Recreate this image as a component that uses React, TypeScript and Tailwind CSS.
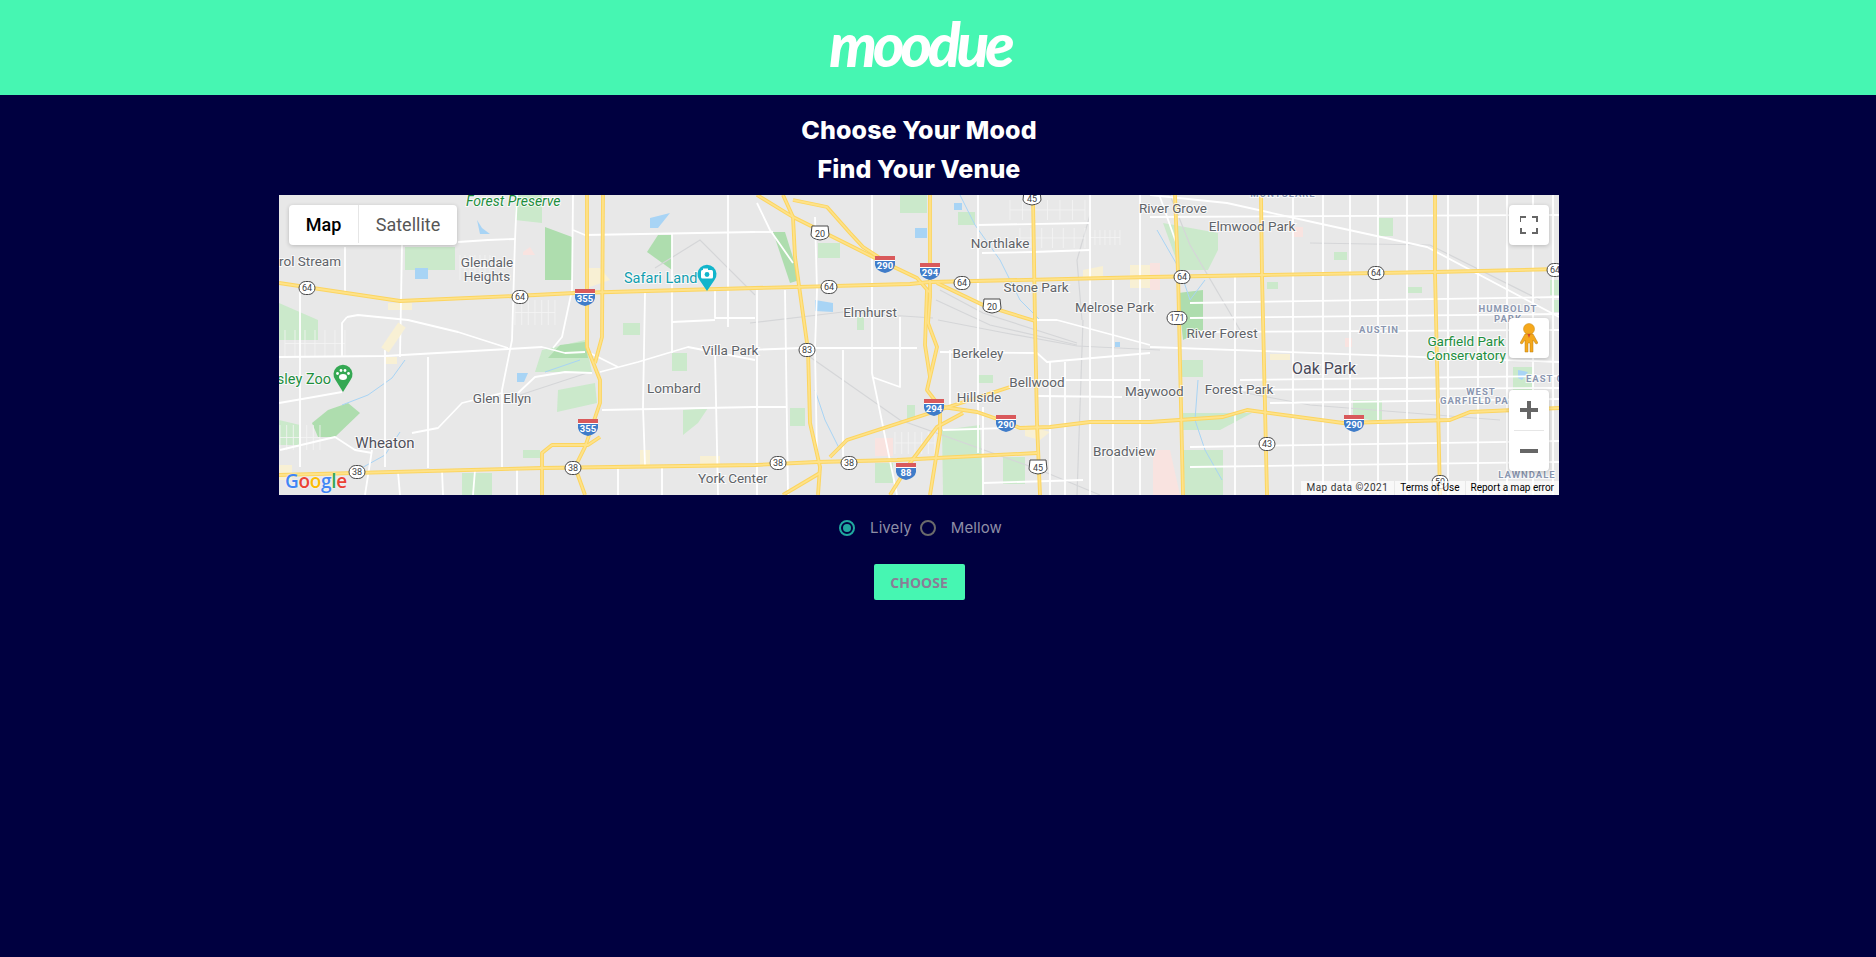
import { useState } from "react";

const parks = [
  "515,195 542,195 542,223 515,220",
  "542,350 585,340 592,372 535,372",
  "558,390 595,383 597,403 557,412",
  "683,410 708,408 698,423 683,435",
  "672,353 687,353 687,371 672,371",
  "623,323 640,323 640,335 623,335",
  "405,247 455,247 455,270 405,270",
  "462,473 492,473 492,495 462,495",
  "523,450 540,450 540,458 523,458",
  "279,303 318,320 318,340 279,340",
  "279,420 300,425 300,445 279,445",
  "818,243 840,243 840,258 818,258",
  "958,212 975,212 975,225 958,225",
  "900,195 927,195 927,213 900,213",
  "942,430 980,425 983,495 943,495",
  "1003,457 1025,457 1025,484 1003,484",
  "875,463 893,463 893,483 875,483",
  "790,408 805,408 805,426 790,426",
  "857,317 864,317 864,330 857,330",
  "907,405 915,405 915,420 907,420",
  "978,375 993,375 993,383 978,383",
  "1163,223 1218,233 1218,250 1208,270 1180,270",
  "1183,450 1223,450 1223,495 1185,495",
  "1182,360 1203,360 1203,377 1182,377",
  "1180,413 1252,413 1220,430 1183,430",
  "1353,400 1382,400 1382,422 1353,417",
  "1378,218 1393,218 1393,236 1378,236",
  "1334,252 1347,252 1347,260 1334,260",
  "1267,282 1278,282 1278,289 1267,289",
  "1408,287 1422,287 1422,293 1408,293",
  "1552,300 1559,300 1559,312 1552,312",
  "1513,367 1533,367 1533,390 1513,390",
  "1550,280 1559,280 1559,295 1550,295",
];

const darkParks = [
  "545,227 572,237 572,280 545,280",
  "647,252 658,235 672,235 672,270",
  "312,423 328,410 348,403 360,413 335,437 318,437",
  "773,232 785,232 800,280 790,283",
  "1178,293 1203,290 1203,330 1183,340",
  "560,345 585,342 588,358 548,358",
];

const pinks = [
  "1153,450 1170,450 1180,495 1153,495",
  "1150,263 1160,263 1160,290 1150,290",
  "1293,227 1303,227 1303,237 1293,237",
  "1345,338 1352,338 1352,347 1345,347",
  "875,438 893,438 893,456 875,456",
  "523,252 530,247 535,255 523,255",
];

const creams = [
  "1083,270 1103,266 1103,277 1083,277",
  "1130,265 1150,265 1150,288 1130,288",
  "587,268 600,268 610,280 587,288",
  "388,303 412,303 412,310 388,310",
  "385,357 397,357 397,364 385,364",
  "279,465 292,465 292,480 279,480",
  "640,450 650,450 650,465 640,465",
  "700,456 720,456 720,465 700,465",
  "1270,354 1290,354 1290,360 1270,360",
  "1025,425 1050,432 1040,440 1025,436",
];

const water = [
  "915,228 927,228 927,238 915,238",
  "815,300 833,303 833,312 815,311",
  "415,268 428,268 428,279 415,279",
  "517,373 528,373 524,382 517,382",
  "650,218 670,213 658,228 650,228",
  "477,220 482,228 490,234 480,234",
  "954,203 962,203 962,210 954,210",
  "1115,342 1120,342 1120,347 1115,347",
  "1518,370 1528,372 1522,380 1518,378",
];

const streams = [
  "M358 470 L385 455 L400 432",
  "M342 405 L368 395 L392 378 L405 360",
  "M545 372 L580 360",
  "M960 195 L975 225 L1000 260 L1020 300 L1040 320",
  "M1157 230 L1180 270 L1190 300 L1205 280",
  "M1198 380 L1195 420 L1205 450 L1222 480",
  "M815 390 L825 420 L840 450",
];

const rails = [
  "M940 290 L983 313 L1077 343",
  "M936 300 L990 325 L1077 345",
  "M938 320 L1000 332 L1077 346",
  "M1077 346 L1160 350",
  "M750 323 L843 312 L933 318",
  "M1083 320 L1077 495",
  "M1090 215 L1077 260 L1082 320",
  "M1170 195 L1190 245 L1240 330",
  "M800 350 L900 420 L1040 470 L1100 495",
  "M1230 390 L1310 405 L1500 420",
  "M1310 243 L1430 245 L1540 300",
  "M520 395 L590 372",
  "M655 268 L700 240 L755 295",
];

const whites = [
  "M458 242 L488 240 L515 239",
  "M517 195 L515 240 L512 340 L502 390 L502 467",
  "M573 195 L572 290 L562 337 L553 348",
  "M573 230 L585 235 L755 232",
  "M672 233 L672 353",
  "M728 195 L728 295 L728 327",
  "M715 290 L715 318 L755 318",
  "M672 322 L715 320",
  "M645 293 L643 407 L645 465",
  "M345 247 L345 293",
  "M347 317 L342 323 L342 357",
  "M402 245 L400 357",
  "M347 317 L358 315 L408 320 L458 332 L508 348",
  "M279 357 L385 356 L508 349 L542 347 L565 353 L585 352",
  "M590 353 L618 367",
  "M600 372 L638 362 L688 347 L755 360",
  "M518 393 L535 377 L565 372 L592 373",
  "M385 350 L385 467",
  "M428 357 L428 468",
  "M279 403 L308 398 L342 392",
  "M280 450 L335 437 L355 450 L372 453",
  "M372 450 L365 495",
  "M412 433 L438 428 L462 403 L502 393",
  "M602 410 L755 407",
  "M715 353 L718 495",
  "M398 472 L400 495",
  "M442 470 L443 495",
  "M475 470 L473 495",
  "M517 468 L517 495",
  "M618 466 L618 495",
  "M662 465 L662 495",
  "M300 290 L300 467",
  "M757 203 L770 230 L793 263",
  "M750 232 L773 232",
  "M757 290 L757 495",
  "M785 290 L788 495",
  "M815 217 L817 290 L815 350 L817 457",
  "M750 350 L800 348 L917 348",
  "M940 352 L1037 353 L1047 362 L1150 353",
  "M872 195 L872 373 L897 495",
  "M872 377 L900 387 L900 317",
  "M843 350 L843 457",
  "M950 350 L950 407",
  "M978 195 L978 453",
  "M982 253 L1033 252 L1090 250",
  "M977 225 L1090 223",
  "M1037 320 L1057 320 L1113 335 L1150 345",
  "M750 407 L787 407",
  "M1065 362 L1065 495",
  "M1090 195 L1090 495",
  "M1037 380 L1150 380",
  "M1037 396 L1122 397",
  "M943 430 L1040 427",
  "M983 483 L1083 480",
  "M983 407 L983 495",
  "M1050 362 L1050 495",
  "M1113 280 L1113 495",
  "M1140 195 L1140 495",
  "M1150 195 L1227 203 L1317 223 L1427 247 L1559 317",
  "M1160 197 L1177 245",
  "M1150 347 L1559 362",
  "M1235 275 L1235 495",
  "M1293 195 L1293 495",
  "M1323 195 L1323 495",
  "M1350 195 L1350 495",
  "M1378 195 L1378 495",
  "M1407 195 L1407 495",
  "M1448 195 L1448 495",
  "M1478 195 L1478 495",
  "M1507 195 L1507 495",
  "M1533 195 L1533 495",
  "M1553 195 L1553 495",
  "M1150 217 L1559 215",
  "M1190 303 L1559 297",
  "M1190 318 L1559 314",
  "M1190 332 L1559 330",
  "M1240 380 L1559 376",
  "M1220 390 L1559 388",
  "M1270 403 L1559 399",
  "M1190 447 L1559 441",
  "M1190 467 L1559 462",
];

// thin residential streets, drawn as small combs
const neighbourhoods = [
  [285, 330, 60, 27],
  [460, 255, 30, 25],
  [515, 300, 40, 25],
  [1010, 200, 75, 20],
  [1020, 228, 65, 20],
  [895, 432, 40, 22],
  [1090, 230, 30, 15],
  [280, 425, 40, 25],
];

const highways = [
  "M279 283 L400 301 L515 296 L575 293 L755 288 L910 284 L930 282 L1150 277 L1262 275 L1435 272 L1559 269",
  "M587 195 L587 347 L600 380 L600 403 L585 447 L575 467 L585 495",
  "M603 195 L602 337 L595 363",
  "M542 495 L542 453 L552 445 L588 445 L600 437",
  "M279 475 L542 468 L755 465 L817 462 L897 460 L1037 453",
  "M783 195 L793 217 L795 257 L808 350 L810 423 L820 467 L818 495",
  "M757 195 L793 217 L873 257 L917 278 L930 293",
  "M793 200 L827 207 L850 233 L863 247 L883 260",
  "M930 195 L930 297 L928 323 L937 347 L930 377 L927 390 L940 407 L940 433 L930 495",
  "M927 290 L925 345 L930 377",
  "M937 283 L983 305 L1035 321",
  "M1033 195 L1035 323 L1037 423 L1040 495",
  "M943 407 L977 412 L1000 420 L1020 428 L1050 427 L1090 422 L1150 422 L1223 417 L1247 410 L1343 423 L1450 420 L1470 412 L1559 408",
  "M830 457 L847 440 L930 413 L1010 387",
  "M890 495 L910 463 L937 427 L963 413",
  "M783 495 L820 473",
  "M1175 195 L1178 273 L1183 495",
  "M1261 195 L1262 275 L1267 495",
  "M1435 195 L1435 273 L1440 495",
];

type Label = {
  t: string;
  x: number;
  y: number;
  c?: string;
  s?: number;
  a?: "start" | "middle" | "end";
  i?: boolean;
  b?: boolean;
};

const labels: Label[] = [
  { t: "Forest Preserve", x: 466, y: 206, c: "#1e8e3e", i: true, s: 14 },
  { t: "Carol Stream", x: 341, y: 266, a: "end" },
  { t: "Glendale", x: 487, y: 267, a: "middle" },
  { t: "Heights", x: 487, y: 281, a: "middle" },
  { t: "Safari Land", x: 624, y: 283, c: "#129eaf", s: 14.5 },
  { t: "Villa Park", x: 702, y: 355 },
  { t: "Lombard", x: 674, y: 393, a: "middle" },
  { t: "Glen Ellyn", x: 502, y: 403, a: "middle" },
  { t: "Cosley Zoo", x: 331, y: 384, c: "#1e8e3e", a: "end", s: 14.5 },
  { t: "Wheaton", x: 385, y: 448, a: "middle", s: 15, c: "#50505a" },
  { t: "York Center", x: 698, y: 483 },
  { t: "Elmhurst", x: 870, y: 317, a: "middle" },
  { t: "Northlake", x: 1000, y: 248, a: "middle" },
  { t: "Stone Park", x: 1036, y: 292, a: "middle" },
  { t: "Melrose Park", x: 1075, y: 312 },
  { t: "Berkeley", x: 978, y: 358, a: "middle" },
  { t: "Bellwood", x: 1037, y: 387, a: "middle" },
  { t: "Hillside", x: 979, y: 402, a: "middle" },
  { t: "Maywood", x: 1125, y: 396 },
  { t: "Broadview", x: 1093, y: 456 },
  { t: "River Grove", x: 1207, y: 213, a: "end" },
  { t: "Elmwood Park", x: 1252, y: 231, a: "middle" },
  { t: "River Forest", x: 1222, y: 338, a: "middle" },
  { t: "Oak Park", x: 1324, y: 374, a: "middle", s: 16, c: "#4a4a5a" },
  { t: "Forest Park", x: 1239, y: 394, a: "middle" },
  { t: "Garfield Park", x: 1466, y: 346, a: "middle", c: "#1e8e3e" },
  { t: "Conservatory", x: 1466, y: 360, a: "middle", c: "#1e8e3e" },
  { t: "AUSTIN", x: 1379, y: 333, a: "middle", s: 9.5, c: "#8a96b0", b: true },
  { t: "HUMBOLDT", x: 1508, y: 312, a: "middle", s: 9.5, c: "#8a96b0", b: true },
  { t: "PARK", x: 1508, y: 322, a: "middle", s: 9.5, c: "#8a96b0", b: true },
  { t: "MONTCLARE", x: 1283, y: 197, a: "middle", s: 9.5, c: "#8a96b0", b: true },
  { t: "EAST G", x: 1526, y: 382, s: 9.5, c: "#8a96b0", b: true },
  { t: "WEST", x: 1481, y: 395, a: "middle", s: 9.5, c: "#8a96b0", b: true },
  { t: "GARFIELD PA", x: 1440, y: 404, s: 9.5, c: "#8a96b0", b: true },
  { t: "LAWNDALE", x: 1527, y: 478, a: "middle", s: 9.5, c: "#8a96b0", b: true },
];

const stateRoutes = [
  ["64", 307, 288], ["64", 520, 297], ["38", 357, 472], ["38", 573, 468],
  ["64", 829, 287], ["64", 962, 283], ["83", 807, 350], ["38", 778, 463],
  ["38", 849, 463], ["64", 1182, 277], ["171", 1177, 318], ["64", 1376, 273],
  ["64", 1555, 270], ["43", 1267, 444], ["50", 1440, 482],
] as const;

const usRoutes = [
  ["20", 820, 233], ["20", 992, 306], ["45", 1032, 198], ["45", 1038, 467],
] as const;

const interstates = [
  ["355", 585, 297], ["355", 588, 427], ["290", 885, 264], ["294", 930, 271],
  ["294", 934, 407], ["290", 1006, 423], ["88", 906, 471], ["290", 1354, 423],
] as const;

function MapDrawing() {
  return (
    <svg viewBox="279 195 1280 300" className="block h-[300px] w-[1280px] font-['Roboto']">
      <rect x="279" y="195" width="1280" height="300" fill="#e8e8e8" />
      {creams.map((p) => (
        <polygon key={p} points={p} fill="#f8f0d4" />
      ))}
      {pinks.map((p) => (
        <polygon key={p} points={p} fill="#f9e3e0" />
      ))}
      {parks.map((p) => (
        <polygon key={p} points={p} fill="#cbe9cb" />
      ))}
      {darkParks.map((p) => (
        <polygon key={p} points={p} fill="#aeddae" />
      ))}
      {water.map((p) => (
        <polygon key={p} points={p} fill="#a8d4f5" />
      ))}
      {streams.map((d) => (
        <path key={d} d={d} fill="none" stroke="#a8d4f5" strokeWidth="1" />
      ))}
      {rails.map((d) => (
        <path key={d} d={d} fill="none" stroke="#d5d6d8" strokeWidth="1.2" />
      ))}
      {neighbourhoods.map(([x, y, w, h]) => (
        <g key={`${x}-${y}`} stroke="#f4f4f4" strokeWidth="0.8">
          {[0, 1, 2, 3, 4, 5, 6].map((n) => (
            <path key={n} d={`M${x + (n * w) / 6} ${y} V${y + h}`} />
          ))}
          <path d={`M${x} ${y + h / 2} H${x + w}`} />
        </g>
      ))}
      {whites.map((d) => (
        <path key={d} d={d} fill="none" stroke="#ffffff" strokeWidth="1.8" strokeLinejoin="round" />
      ))}
      <path d="M385 350 L402 325" fill="none" stroke="#f8f0d4" strokeWidth="9" />
      {highways.map((d) => (
        <path key={d} d={d} fill="none" stroke="#fcd560" strokeWidth="3.8" strokeLinejoin="round" />
      ))}
      {highways.map((d) => (
        <path key={d + "i"} d={d} fill="none" stroke="#fee289" strokeWidth="1.8" strokeLinejoin="round" />
      ))}
      {stateRoutes.map(([t, x, y]) => {
        const w = t.length > 2 ? 20 : 16;
        return (
          <g key={t + x}>
            <rect x={x - w / 2} y={y - 6.5} width={w} height={13} rx="6.5" fill="#ffffff" stroke="#4a4a4a" />
            <text x={x} y={y + 3.2} textAnchor="middle" fontSize="9" fill="#3c4043">{t}</text>
          </g>
        );
      })}
      {usRoutes.map(([t, x, y]) => (
        <g key={t + x}>
          <path
            d={`M${x - 8} ${y - 7} L${x + 8} ${y - 7} L${x + 9} ${y + 2} Q${x + 8} ${y + 6} ${x} ${y + 7} Q${x - 8} ${y + 6} ${x - 9} ${y + 2} Z`}
            fill="#ffffff"
            stroke="#4a4a4a"
          />
          <text x={x} y={y + 3.5} textAnchor="middle" fontSize="9" fill="#3c4043">{t}</text>
        </g>
      ))}
      {interstates.map(([t, x, y]) => (
        <g key={t + x}>
          <path
            d={`M${x - 10} ${y - 4} L${x + 10} ${y - 4} L${x + 10} ${y + 1} Q${x + 9} ${y + 7} ${x} ${y + 9} Q${x - 9} ${y + 7} ${x - 10} ${y + 1} Z`}
            fill="#3f7cc9"
          />
          <path d={`M${x - 10} ${y - 8} L${x + 10} ${y - 8} L${x + 10} ${y - 4} L${x - 10} ${y - 4} Z`} fill="#d9595b" />
          <path d={`M${x - 10} ${y - 3.5} L${x + 10} ${y - 3.5}`} stroke="#ffffff" />
          <text x={x} y={y + 5} textAnchor="middle" fontSize="9.5" fontWeight="700" fill="#ffffff">{t}</text>
        </g>
      ))}
      {labels.map((l) => (
        <text
          key={l.t + l.x}
          x={l.x}
          y={l.y}
          textAnchor={l.a ?? "start"}
          fontSize={l.s ?? 13.5}
          fontStyle={l.i ? "italic" : "normal"}
          fontWeight={l.b ? 700 : 400}
          letterSpacing={l.b ? 1 : 0}
          fill={l.c ?? "#5f6368"}
          stroke="#ffffff"
          strokeWidth="2"
          strokeOpacity="0.75"
          className="[paint-order:stroke]"
        >
          {l.t}
        </text>
      ))}
      <path d="M707 291 L699.5 280 A9.5 9.5 0 1 1 714.5 280 Z" fill="#12b5cb" />
      <rect x="701" y="270" width="12" height="8.5" rx="1.5" fill="#ffffff" />
      <rect x="703" y="268.5" width="5" height="3" fill="#ffffff" />
      <circle cx="707" cy="274.5" r="2.4" fill="#12b5cb" />
      <path d="M343 392 L335.5 380 A9.5 9.5 0 1 1 350.5 380 Z" fill="#34a853" />
      <ellipse cx="343" cy="377" rx="4" ry="3" fill="#ffffff" />
      <circle cx="337.5" cy="373.5" r="1.4" fill="#ffffff" />
      <circle cx="341" cy="370.5" r="1.4" fill="#ffffff" />
      <circle cx="345" cy="370.5" r="1.4" fill="#ffffff" />
      <circle cx="348.5" cy="373.5" r="1.4" fill="#ffffff" />
    </svg>
  );
}

function ControlBox({ className, children }: { className: string; children: React.ReactNode }) {
  return (
    <div className={`absolute flex w-10 flex-col items-center justify-center rounded-sm bg-white shadow-[0_1px_4px_rgba(0,0,0,0.2)] ${className}`}>
      {children}
    </div>
  );
}

function MapPanel() {
  return (
    <div className="relative h-[300px] w-[1280px] overflow-hidden">
      <MapDrawing />

      <div className="absolute left-[10px] top-[10px] flex h-10 w-[168px] rounded-sm bg-white pb-[2px] font-['Roboto'] text-[18px] shadow-[0_1px_4px_rgba(0,0,0,0.2)]">
        <div className="flex w-[69px] items-center justify-center font-medium text-black">Map</div>
        <div className="flex flex-1 items-center justify-center border-l border-[#e6e6e6] text-[#565656]">Satellite</div>
      </div>

      <ControlBox className="right-[10px] top-[10px] h-10">
        <svg width="18" height="18" viewBox="0 0 18 18" fill="none" stroke="#666666" strokeWidth="2">
          <path d="M0 6V1H6M12 1H17V6M17 12V17H12M6 17H1V12" />
        </svg>
      </ControlBox>

      <ControlBox className="right-[10px] top-[123px] h-10">
        <svg width="18" height="30" viewBox="0 0 18 30">
          <circle cx="9" cy="6" r="5.5" fill="#f5a81c" stroke="#c98a12" strokeWidth="0.5" />
          <path d="M5 11H13L18 20L16 21L13 17V29H10V20H8V29H5V17L2 21L0 20Z" fill="#f5a81c" stroke="#b97c10" strokeWidth="0.5" />
          <path d="M7.5 11L9 15L10.5 11Z" fill="#d6492f" />
        </svg>
      </ControlBox>

      <ControlBox className="right-[10px] top-[195px] h-[81px]">
        <svg width="18" height="18" viewBox="0 0 18 18" fill="#666666">
          <path d="M7 0H11V7H18V11H11V18H7V11H0V7H7Z" />
        </svg>
        <div className="my-[11px] h-px w-[30px] bg-[#e6e6e6]" />
        <svg width="18" height="18" viewBox="0 0 18 18" fill="#666666">
          <rect x="0" y="7" width="18" height="4" />
        </svg>
      </ControlBox>

      <div className="absolute bottom-[2px] left-[6px] font-['Open_Sans'] text-[19px] font-semibold leading-6 tracking-[-0.3px] [text-shadow:0_0_2px_#fff]">
        <span className="text-[#4285f4]">G</span>
        <span className="text-[#ea4335]">o</span>
        <span className="text-[#fbbc05]">o</span>
        <span className="text-[#4285f4]">g</span>
        <span className="text-[#34a853]">l</span>
        <span className="text-[#ea4335]">e</span>
      </div>

      <div className="absolute bottom-0 right-0 flex h-[14px] items-center font-['Roboto'] text-[10px] leading-none text-black">
        <span className="flex h-full items-center bg-white/70 pl-[5px] pr-[6px] tracking-[0.5px] text-[#333333]">Map data ©2021</span>
        <span className="ml-px flex h-full items-center bg-white/70 px-[5px]">Terms of Use</span>
        <span className="ml-px flex h-full items-center bg-white/70 px-[5px]">Report a map error</span>
      </div>
    </div>
  );
}

function MoodOption({ label, checked, onPick }: { label: string; checked: boolean; onPick: () => void }) {
  return (
    <label className="flex cursor-pointer items-center">
      <input type="radio" checked={checked} onChange={onPick} className="sr-only" />
      <span
        className={`flex h-4 w-4 items-center justify-center rounded-full border-2 ${checked ? "border-[#20a89f]" : "border-[#6b6b6b]"}`}
      >
        {checked && <span className="h-2 w-2 rounded-full bg-[#20a89f]" />}
      </span>
      <span className="ml-[15px] font-['Inter'] text-[15px] tracking-[0.1px] text-[#8e8ea6]">{label}</span>
    </label>
  );
}

export default function App() {
  const [mood, setMood] = useState("Lively");

  return (
    <div className="min-h-[957px] bg-[#000040]">
      <header className="flex h-[95px] items-center justify-center bg-[#46f6b2] pr-[36px]">
        <span className="pb-2 font-['Lato'] text-[60px] font-black italic leading-none tracking-[-4px] text-white">
          moodue
        </span>
      </header>

      <main className="flex flex-col items-center pr-[38px]">
        <h1 className="mt-4 font-['Inter'] text-[25px] font-extrabold leading-[39px] tracking-[0.1px] text-white">Choose Your Mood</h1>
        <h2 className="font-['Inter'] text-[25px] font-extrabold leading-[39px] tracking-[0.1px] text-white">Find Your Venue</h2>

        <div className="mt-[6px]">
          <MapPanel />
        </div>

        <div className="mt-[22px] flex h-[22px] items-center gap-[8px] pl-[3px]">
          <MoodOption label="Lively" checked={mood === "Lively"} onPick={() => setMood("Lively")} />
          <MoodOption label="Mellow" checked={mood === "Mellow"} onPick={() => setMood("Mellow")} />
        </div>

        <button className="mt-[25px] h-9 w-[91px] rounded-[2px] bg-[#46f6b2] font-['Open_Sans'] text-[14px] font-bold text-[#8a7d96]">
          CHOOSE
        </button>
      </main>
    </div>
  );
}
